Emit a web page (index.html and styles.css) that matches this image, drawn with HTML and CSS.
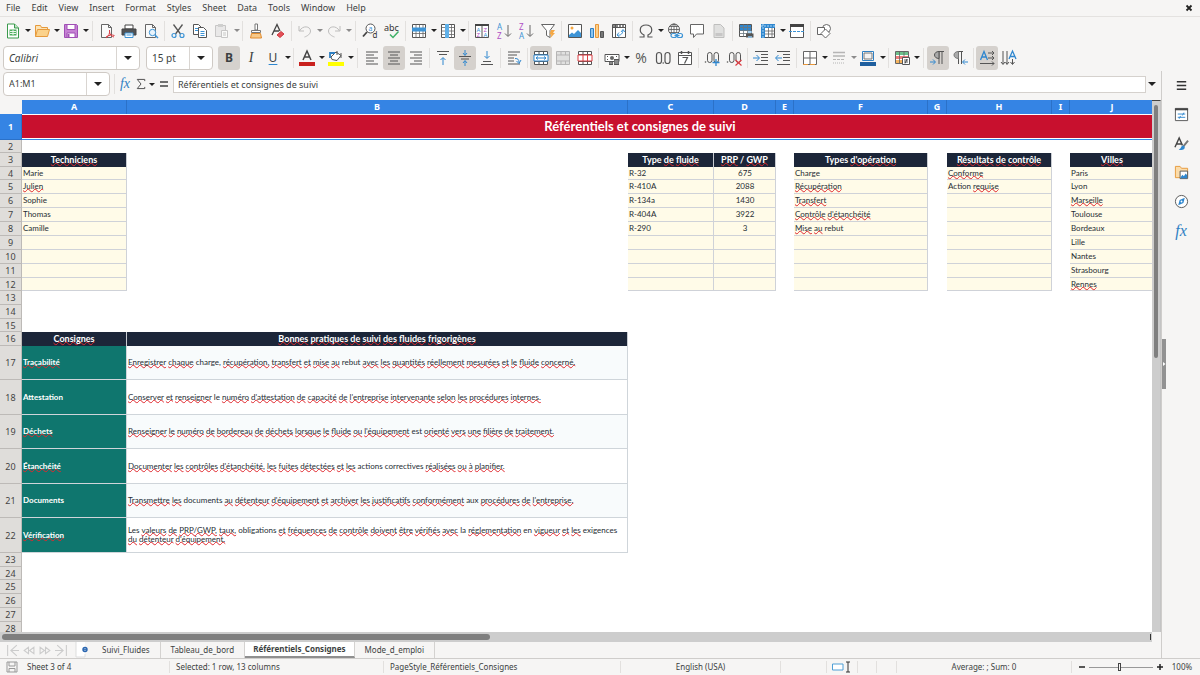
FILE: index.html
```html
<!DOCTYPE html>
<html lang="en">
<head>
<meta charset="utf-8">
<title>Référentiels_Consignes</title>
<link rel="stylesheet" href="styles.css">
</head>
<body>
<div class="app">
<header>
<nav class="menubar">
<button>File</button><button>Edit</button><button>View</button><button>Insert</button><button>Format</button><button>Styles</button><button>Sheet</button><button>Data</button><button>Tools</button><button>Window</button><button>Help</button>
<button class="close" aria-label="Close"><svg viewBox="0 0 8 8"><path d="M1.5 1.5l5 5M6.5 1.5l-5 5" stroke="#222" stroke-width="1.8"/></svg></button>
</nav>
<div class="toolbar" role="toolbar" aria-label="Standard">
<button class="tb" aria-label="New"><svg viewBox="0 0 16 16"><path d="M2.5 1h7l4 4v10h-11z" fill="#fff" stroke="#3a9a4c"/><path d="M9.500 1v4h4" fill="#bfe3c4" stroke="#3a9a4c"/><path d="M4.500 6.500h7v6h-7z" fill="#4cae5c"/><path d="M5 8.500h6M5 10.500h6M8 7v5" stroke="#e8f7ea"/></svg></button><button class="arr" aria-label="New options"></button>
<button class="tb" aria-label="Open"><svg viewBox="0 0 16 16"><path d="M1.500 13.500v-11h5l1 2h6v2" fill="#fce3b4" stroke="#e69a3c"/><path d="M1.500 13.500l2-7h12l-2 7z" fill="#fbd28b" stroke="#e69a3c"/></svg></button><button class="arr" aria-label="Open options"></button>
<button class="tb" aria-label="Save"><svg viewBox="0 0 16 16"><path d="M1.500 1.500h12l1 1v12h-13z" fill="#c681d4" stroke="#a04fb5"/><path d="M4 1.500h8v5H4z" fill="#fff" stroke="#a04fb5"/><path d="M4 10h8v4.500H4z" fill="#fff" stroke="#a04fb5"/><path d="M5.500 11v3" stroke="#a04fb5" stroke-width="2"/></svg></button><button class="arr" aria-label="Save options"></button>
<i class="sep wide"></i>
<button class="tb" aria-label="Export as PDF"><svg viewBox="0 0 16 16"><path d="M2.500 1.500h7l3 3v10h-10z" fill="#fafafa" stroke="#666"/><path d="M9.500 1.500v3h3" fill="none" stroke="#666"/><path d="M7 15c3-2 4-5 3.500-8M7 14c3-2 6-2.500 8.500-1.500M10.500 9c.5 2.500 2 4.500 4.500 5" fill="none" stroke="#d93c43"/></svg></button>
<button class="tb" aria-label="Print"><svg viewBox="0 0 16 16"><path d="M4 2h8v4H4z" fill="#fff" stroke="#444"/><path d="M1 6h14v6H1z" fill="#505356" stroke="#444"/><path d="M4 10h8v4.500H4z" fill="#fff" stroke="#3d94d6"/><path d="M5.500 12h5" stroke="#3d94d6"/></svg></button>
<button class="tb" aria-label="Print preview"><svg viewBox="0 0 16 16"><path d="M2.500 1.500h7l3 3v10h-10z" fill="#fafafa" stroke="#666"/><path d="M9.500 1.500v3h3" fill="none" stroke="#666"/><circle cx="9.500" cy="9.500" r="3.200" fill="#e9f4fc" stroke="#3d94d6"/><path d="M12 12l3 3" stroke="#3d94d6" stroke-width="1.500"/></svg></button>
<i class="sep"></i>
<button class="tb" aria-label="Cut"><svg viewBox="0 0 16 16"><path d="M3.500 1.500l7 9.500M12.500 1.500l-7 9.500" stroke="#555" stroke-width="1.300"/><circle cx="4" cy="12.500" r="2" fill="none" stroke="#3d94d6" stroke-width="1.200"/><circle cx="12" cy="12.500" r="2" fill="none" stroke="#3d94d6" stroke-width="1.200"/></svg></button>
<button class="tb" aria-label="Copy"><svg viewBox="0 0 16 16"><path d="M1.500 1.500h5l3 3v7h-8z" fill="#fff" stroke="#555"/><path d="M3 5.500h3M3 7.500h3" stroke="#3d94d6"/><path d="M6.500 4.500h5l3 3v7h-8z" fill="#fff" stroke="#555"/><path d="M8.500 8.500h4M8.500 10.500h4M8.500 12.500h4" stroke="#3d94d6"/></svg></button>
<button class="tb off" aria-label="Paste" disabled><svg viewBox="0 0 16 16"><path d="M1.500 2.500h10v11h-10z" fill="#ddd" stroke="#999"/><path d="M4 1h5v3H4z" fill="#aaa"/><path d="M7.500 7.500h6v7h-6z" fill="#fff" stroke="#999"/><path d="M9 10h3M9 12h3" stroke="#999"/></svg></button><button class="arr off" aria-label="Paste options" disabled></button>
<i class="sep"></i>
<button class="tb" aria-label="Clone formatting"><svg viewBox="0 0 16 16"><path d="M7 1h2.500v6H7z" fill="#fff" stroke="#777"/><path d="M3.500 7.500h9v2h-9z" fill="#fff" stroke="#777"/><path d="M3.500 10.500h9l1 4.500h-11z" fill="#f7c98a" stroke="#e08a2c"/></svg></button>
<button class="tb" aria-label="Clear formatting"><svg viewBox="0 0 16 16"><path d="M2 12L7 1.500 10 8M4 8h5" fill="none" stroke="#444" stroke-width="1.300"/><path d="M7 12l4-3.500 3 2.500-4 3.500z" fill="#e35158" stroke="#cf3a42"/></svg></button>
<i class="sep"></i>
<button class="tb off" aria-label="Undo" disabled><svg viewBox="0 0 16 16"><path d="M2 3v5h5M2.500 8c3-6 11-5 11 0 0 3-3 5-6 6" fill="none" stroke="#888"/></svg></button><button class="arr off" aria-label="Undo list" disabled></button>
<button class="tb off" aria-label="Redo" disabled><svg viewBox="0 0 16 16"><path d="M14 3v5H9M13.500 8c-3-6-11-5-11 0 0 3 3 5 6 6" fill="none" stroke="#888"/></svg></button><button class="arr off" aria-label="Redo list" disabled></button>
<i class="sep wide"></i>
<button class="tb" aria-label="Find and replace"><svg viewBox="0 0 16 16"><circle cx="8.500" cy="5.500" r="4.500" fill="#fff" stroke="#555"/><path d="M5 9l-4 4.500" stroke="#444" stroke-width="1.800"/><text x="6.500" y="8" font-size="7" fill="#3d94d6">a</text><text x="10.500" y="15" font-size="8" fill="#333">d</text></svg></button>
<button class="tb" aria-label="Spelling"><svg viewBox="0 0 16 16"><text x="0" y="8" font-size="9" fill="#333">abc</text><path d="M6 11.500l3 3 5.500-6" fill="none" stroke="#3fb168" stroke-width="1.500"/></svg></button>
<i class="sep"></i>
<button class="tb" aria-label="Row"><svg viewBox="0 0 16 16"><path d="M1.500 1.500h13v13h-13z" fill="#fff" stroke="#555"/><path d="M1.500 10.500h13M5 1.500v13M8.500 1.500v13M12 1.500v13" stroke="#666" stroke-width=".8"/><path d="M1 4.500h14v4H1z" fill="#3d94d6"/></svg></button><button class="arr" aria-label="Row options"></button>
<button class="tb" aria-label="Column"><svg viewBox="0 0 16 16"><path d="M1.500 1.500h13v13h-13z" fill="#fff" stroke="#555"/><path d="M1.500 4.500h13M1.500 8h13M1.500 11.500h13M11.500 1.500v13" stroke="#666" stroke-width=".8"/><path d="M5 1h4v14H5z" fill="#5fb0e8"/></svg></button><button class="arr" aria-label="Column options"></button>
<i class="sep"></i>
<button class="tb" aria-label="Sort"><svg viewBox="0 0 16 16"><path d="M1.500 1.500h13v13h-13zM8 1.500v13" fill="#fff" stroke="#555"/><path d="M1 2h14" stroke="#444" stroke-width="2"/><text x="2.500" y="8.500" font-size="6" fill="#3d94d6">A</text><text x="2.500" y="14" font-size="6" fill="#b04fc4">Z</text><text x="9.500" y="8.500" font-size="6" fill="#b04fc4">Z</text><text x="9.500" y="14" font-size="6" fill="#3d94d6">A</text></svg></button>
<button class="tb" aria-label="Sort ascending"><svg viewBox="0 0 16 16"><text x="1" y="7" font-size="8" fill="#3d94d6">A</text><text x="1" y="15.500" font-size="8" fill="#b04fc4">Z</text><path d="M12 2v11M9 10.500l3 3 3-3" fill="none" stroke="#666"/></svg></button>
<button class="tb" aria-label="Sort descending"><svg viewBox="0 0 16 16"><text x="1" y="7" font-size="8" fill="#b04fc4">Z</text><text x="1" y="15.500" font-size="8" fill="#3d94d6">A</text><path d="M12 2v11M9 10.500l3 3 3-3" fill="none" stroke="#666"/></svg></button>
<button class="tb" aria-label="AutoFilter"><svg viewBox="0 0 16 16"><path d="M1.500 1.500h13l-4.500 6v7l-3.500-2v-5z" fill="#fff" stroke="#666"/><path d="M11 7h4l-2 3h2l-5 5.500 1.500-4h-2z" fill="#f5a742"/></svg></button>
<i class="sep"></i>
<button class="tb" aria-label="Insert image"><svg viewBox="0 0 16 16"><path d="M1.500 1.500h13v13h-13z" fill="#fff" stroke="#555"/><circle cx="5" cy="5" r="1.500" fill="#f5a742"/><path d="M2 12l3-2.500L7 11l4-4 3 3v4H2z" fill="#3d94d6"/></svg></button>
<button class="tb" aria-label="Insert chart"><svg viewBox="0 0 16 16"><path d="M1.500 5.500h3v9h-3z" fill="#8cc5ef" stroke="#2f80c3"/><path d="M6.500 1.500h3v13h-3z" fill="#fbd08c" stroke="#e8973a"/><path d="M11.500 8.500h3v6h-3z" fill="#777" stroke="#555"/></svg></button>
<button class="tb" aria-label="Pivot table"><svg viewBox="0 0 16 16"><path d="M1.500 1.500h13v13h-13z" fill="#fff" stroke="#555"/><path d="M1.500 4.500h13M4.500 1.500v13" stroke="#555"/><path d="M2 3h12" stroke="#888" stroke-width="2" stroke-dasharray="2 1"/><path d="M6 12c4 1 6-2 6-5M10 9l2-2.500L14 9M8 9.500L6 12l2.500 2" fill="none" stroke="#3d94d6"/></svg></button>
<i class="sep"></i>
<button class="tb" aria-label="Special character"><svg viewBox="0 0 16 16"><path d="M1.500 14h4.500v-2C.5 9.500 1 2 8 2s7.500 7.500 2 10v2h4.500" fill="none" stroke="#555" stroke-width="1.200"/></svg></button><button class="arr" aria-label="Special character options"></button>
<button class="tb" aria-label="Hyperlink"><svg viewBox="0 0 16 16"><circle cx="7" cy="6.500" r="5.500" fill="#fff" stroke="#555"/><path d="M1.500 6.500h11M7 1v11M2.500 3.500h9M2.500 9.500h9" stroke="#555" stroke-width=".8"/><ellipse cx="7" cy="6.500" rx="2.800" ry="5.500" fill="none" stroke="#555" stroke-width=".8"/><path d="M5 10h11v5H5z" fill="#f6f5f4"/><rect x="4" y="10.500" width="5.500" height="4" rx="2" fill="none" stroke="#3d94d6" stroke-width="1.200"/><rect x="10" y="10.500" width="5.500" height="4" rx="2" fill="none" stroke="#3d94d6" stroke-width="1.200"/><path d="M7.500 12.500h5" stroke="#3d94d6" stroke-width="1.200"/></svg></button>
<button class="tb" aria-label="Comment"><svg viewBox="0 0 16 16"><path d="M1.500 1.500h13v9.500h-7l-3 3.500V11h-3z" fill="#fff" stroke="#666"/></svg></button>
<button class="tb off" aria-label="Headers and footers" disabled><svg viewBox="0 0 16 16"><path d="M3 1.500h6.500l3.500 3.500v9.500H3z" fill="#ccc" stroke="#888"/><path d="M4.500 10h7v3h-7z" fill="#999"/></svg></button>
<i class="sep"></i>
<button class="tb" aria-label="Print area"><svg viewBox="0 0 16 16"><path d="M1.500 1.500h12v12h-12z" fill="#fff" stroke="#555"/><path d="M2 2h11v6H2z" fill="#2f87cf"/><path d="M1.500 4.500h12M1.500 7.500h12M1.500 10.500h12M5.500 1.500v12M9.500 1.500v12" stroke="#6a7780" stroke-width=".8"/><path d="M8 10.500h7.500v4H8z" fill="#555"/><path d="M10 9h4M10 14h4" stroke="#8cc5ef" stroke-width="1.500"/></svg></button>
<button class="tb" aria-label="Freeze rows and columns"><svg viewBox="0 0 16 16"><path d="M1.500 1.500h13v13h-13z" fill="#fff" stroke="#555"/><path d="M1 1h14v4H1zM1 1h4v14H1z" fill="#2f87cf"/><path d="M5 8h10M5 11h10M8.500 5v10M12 5v10" stroke="#666" stroke-width=".8"/><path d="M3 1v14M1 3h14" stroke="#a9d4f4" stroke-dasharray="2 1"/></svg></button><button class="arr" aria-label="Freeze options"></button>
<button class="tb" aria-label="Split window"><svg viewBox="0 0 16 16"><path d="M1.500 1.500h13v13h-13z" fill="#fff" stroke="#555"/><path d="M1 2.500h14" stroke="#444" stroke-width="3"/><path d="M0 8.500h16" stroke="#3d94d6" stroke-dasharray="3 1"/></svg></button>
<i class="sep"></i>
<button class="tb" aria-label="Show draw functions"><svg viewBox="0 0 16 16"><circle cx="10.500" cy="5.500" r="4" fill="#fff" stroke="#666"/><path d="M1.500 4.500h7v7h-7z" fill="#fff" stroke="#666"/><path d="M9.500 6l4.500 4.500-4.500 4.500L5 10.500z" fill="#fff" stroke="#666"/></svg></button>
</div>
<div class="toolbar format" role="toolbar" aria-label="Formatting">
<div class="combo font"><input aria-label="Font name" value="Calibri"><button aria-label="Font list"></button></div>
<div class="combo size"><input aria-label="Font size" value="15 pt"><button aria-label="Size list"></button></div>
<button class="tb on bold" aria-pressed="true">B</button>
<button class="tb ital">I</button>
<button class="tb under">U</button><button class="arr" aria-label="Underline options"></button>
<i class="sep"></i>
<button class="tb" aria-label="Font colour"><svg viewBox="0 0 16 16"><path d="M4 10L8 1l4 9M5.500 7h5" fill="none" stroke="#444" stroke-width="1.500"/><path d="M0 12h16v4H0z" fill="#c9211e"/></svg></button><button class="arr" aria-label="Font colour options"></button>
<button class="tb" aria-label="Background colour"><svg viewBox="0 0 16 16"><path d="M3 7l5-5 5 3.500-4 5-5-1z" fill="#fff" stroke="#555"/><path d="M2 8V3h5" fill="none" stroke="#2f80c3" stroke-width="1.800"/><path d="M9 1v4M13 3v5" stroke="#555"/><path d="M0 12h16v4H0z" fill="#ff0"/></svg></button><button class="arr" aria-label="Background colour options"></button>
<i class="sep wide"></i>
<button class="tb" aria-label="Align left"><svg viewBox="0 0 16 16"><path d="M2 2h12M2 5h8M2 8h12M2 11h8M2 14h12" stroke="#555"/></svg></button>
<button class="tb on" aria-label="Center" aria-pressed="true"><svg viewBox="0 0 16 16"><path d="M2 2h12M4 5h8M2 8h12M4 11h8M2 14h12" stroke="#555"/></svg></button>
<button class="tb" aria-label="Align right"><svg viewBox="0 0 16 16"><path d="M2 2h12M6 5h8M2 8h12M6 11h8M2 14h12" stroke="#555"/></svg></button>
<i class="sep"></i>
<button class="tb" aria-label="Align top"><svg viewBox="0 0 16 16"><path d="M2 1.500h12M4 4.500h8" stroke="#555"/><path d="M8 15V8M5.500 10L8 7.500l2.500 2.500" fill="none" stroke="#2f87cf"/></svg></button>
<button class="tb on" aria-label="Center vertically" aria-pressed="true"><svg viewBox="0 0 16 16"><path d="M2 6.500h12M4 9h8" stroke="#555"/><path d="M8 0v5M6 3l2 2.500L10 3M8 16v-5M6 13l2-2.500 2 2.500" fill="none" stroke="#2f87cf"/></svg></button>
<button class="tb" aria-label="Align bottom"><svg viewBox="0 0 16 16"><path d="M4 11.500h8M2 14.500h12" stroke="#555"/><path d="M8 1v7M5.500 6L8 8.500 10.500 6" fill="none" stroke="#2f87cf"/></svg></button>
<i class="sep"></i>
<button class="tb" aria-label="Wrap text"><svg viewBox="0 0 16 16"><path d="M2 2h12M2 5h9M2 8h6M2 11h6M2 14h12" stroke="#555"/><path d="M9 8.500c3 0 4 1 4 4M10.500 11l2.500 2.500L15 10" fill="none" stroke="#2f87cf"/></svg></button>
<i class="sep"></i>
<button class="tb on" aria-label="Merge and center cells" aria-pressed="true"><svg viewBox="0 0 16 16"><path d="M1.500 1.500h13v13h-13zM1.500 4.500h13M1.500 11.500h13M6 1.500v3M10.500 1.500v3M6 11.500v3M10.500 11.500v3" fill="#fff" stroke="#555"/><path d="M1 5h14v6H1z" fill="#fff" stroke="#2f87cf"/><path d="M3 8h10M5 6.500L3 8l2 1.500M11 6.500L13 8l-2 1.500" fill="none" stroke="#2f87cf"/></svg></button>
<button class="tb off" aria-label="Merge cells" disabled><svg viewBox="0 0 16 16"><path d="M1.500 1.500h13v13h-13zM1.500 5h13M1.500 11h13M6 1.500v3.500M10.500 1.500v3.500M6 11v3.500M10.500 11v3.500" fill="#ccc" stroke="#777"/></svg></button>
<button class="tb" aria-label="Unmerge cells"><svg viewBox="0 0 16 16"><path d="M1.500 1.500h13v13h-13zM1.500 4.500h13M1.500 11.500h13M6 1.500v13M10.500 1.500v13" fill="#fff" stroke="#555"/><path d="M1 5h14v6H1zM6 5v6M10.500 5v6" fill="#fff" stroke="#dc3c42"/></svg></button>
<i class="sep"></i>
<button class="tb" aria-label="Currency"><svg viewBox="0 0 16 16"><path d="M1 4.500h14v7H1z" fill="#fff" stroke="#555"/><circle cx="8" cy="8" r="2" fill="#666"/><path d="M3 6.500h1M12 6.500h1M3 9.500h1" stroke="#555"/><path d="M5 11h4v4H5zM10 9h5v6h-5z" fill="#555"/><path d="M5.500 13h3M10.500 11h4M10.500 13h4" stroke="#ddd" stroke-width=".8"/></svg></button><button class="arr" aria-label="Currency options"></button>
<button class="tb glyph" aria-label="Percent">%</button>
<button class="tb" aria-label="Number"><svg viewBox="0 0 16 16"><rect x="1.500" y="2.500" width="5" height="11" rx="2.500" fill="none" stroke="#555" stroke-width="1.200"/><circle cx="8.200" cy="13" r=".8" fill="#555"/><rect x="10" y="2.500" width="5" height="11" rx="2.500" fill="none" stroke="#555" stroke-width="1.200"/></svg></button>
<button class="tb" aria-label="Date"><svg viewBox="0 0 16 16"><path d="M1.500 2.500h13v12h-13zM1.500 5.500h13" fill="#fff" stroke="#555"/><path d="M4.500 1v3M11.500 1v3" stroke="#555" stroke-width="1.500"/><path d="M5.500 7.500h5l-3 6" fill="none" stroke="#555" stroke-width="1.200"/></svg></button>
<i class="sep"></i>
<button class="tb" aria-label="Add decimal place"><svg viewBox="0 0 16 16"><circle cx="1.500" cy="12" r=".8" fill="#555"/><rect x="3.500" y="2.500" width="4.500" height="10" rx="2.250" fill="none" stroke="#555"/><rect x="10" y="2.500" width="4.500" height="10" rx="2.250" fill="none" stroke="#555"/><path d="M12 9v7M8.500 12.500h7" stroke="#2f87cf" stroke-width="1.300"/></svg></button>
<button class="tb" aria-label="Delete decimal place"><svg viewBox="0 0 16 16"><circle cx="1.500" cy="12" r=".8" fill="#555"/><rect x="3.500" y="2.500" width="4.500" height="10" rx="2.250" fill="none" stroke="#555"/><rect x="10" y="2.500" width="4.500" height="10" rx="2.250" fill="none" stroke="#555"/><path d="M9.500 10l6 5.500M15.500 10l-6 5.500" stroke="#dc3c42" stroke-width="1.200"/></svg></button>
<i class="sep"></i>
<button class="tb" aria-label="Increase indent"><svg viewBox="0 0 16 16"><path d="M2 1.500h13M8 4.500h7M8 7.500h7M8 10.500h7M2 14.500h13" stroke="#555"/><path d="M0 8h6M3.500 5L6.500 8l-3 3" fill="none" stroke="#2f87cf"/></svg></button>
<button class="tb" aria-label="Decrease indent"><svg viewBox="0 0 16 16"><path d="M2 1.500h13M8 4.500h7M8 7.500h7M8 10.500h7M2 14.500h13" stroke="#555"/><path d="M7 8H1M3.500 5L.5 8l3 3" fill="none" stroke="#2f87cf"/></svg></button>
<i class="sep"></i>
<button class="tb" aria-label="Borders"><svg viewBox="0 0 16 16"><path d="M1.500 1.500h13v13h-13zM1.500 8h13M8 1.500v13" fill="#fff" stroke="#666"/><path d="M1 14.500h14" stroke="#e8973a" stroke-dasharray="5 2"/></svg></button><button class="arr" aria-label="Borders options"></button>
<button class="tb off" aria-label="Border style" disabled><svg viewBox="0 0 16 16"><path d="M2 2.500h12M2 6h12" stroke="#777" stroke-width="1.500"/><path d="M2 9.500h12" stroke="#777" stroke-dasharray="3 1"/><path d="M2 13h12" stroke="#777" stroke-dasharray="1 1"/></svg></button><button class="arr off" aria-label="Border style options" disabled></button>
<button class="tb" aria-label="Border colour"><svg viewBox="0 0 16 16"><path d="M2.500 1.500h11v9h-11z" fill="#fff" stroke="#2f80c3"/><path d="M4 3h8v6H4z" fill="#f3f3f3" stroke="#777"/><path d="M0 12h16v4H0z" fill="#1f5f9e"/></svg></button><button class="arr" aria-label="Border colour options"></button>
<i class="sep"></i>
<button class="tb" aria-label="Conditional formatting"><svg viewBox="0 0 16 16"><path d="M1.500 1.500h13v12h-13z" fill="#fff" stroke="#666"/><path d="M2 2h12v3H2z" fill="#6cc08b"/><path d="M2 6h12v3H2z" fill="#ee7d7d"/><path d="M2 10h6v3H2z" fill="#f5b45f"/><path d="M5.500 1.500v12M10 1.500v5" stroke="#666" stroke-width=".8"/><path d="M8.500 7.500h7v7h-7z" fill="#fff" stroke="#555"/><path d="M10 10h4M10 12h4M13 9l-2 4.500" stroke="#333" stroke-width=".8"/></svg></button><button class="arr" aria-label="Conditional options"></button>
<i class="sep wide"></i>
<button class="tb on" aria-label="Left to right" aria-pressed="true"><svg viewBox="0 0 16 16"><path d="M9 2v12M12 2v12M8 1.500h6" stroke="#555" fill="none"/><path d="M9 1.500c-6 0-6 7 0 7z" fill="#aaa" stroke="#555"/><path d="M0 12h5M3 9.500L5.500 12 3 14.500" fill="none" stroke="#2f87cf"/></svg></button>
<button class="tb" aria-label="Right to left"><svg viewBox="0 0 16 16"><path d="M6.500 2v12M9.500 2v12M6 1.500h5" stroke="#555" fill="none"/><path d="M6.500 1.500c-6 0-6 7 0 7z" fill="#aaa" stroke="#777"/><path d="M16 12h-5M13 9.500L10.500 12l2.500 2.500" fill="none" stroke="#2f87cf"/></svg></button>
<i class="sep"></i>
<button class="tb on" aria-label="Text direction from left to right" aria-pressed="true"><svg viewBox="0 0 16 16"><path d="M1.500 10L5 1.500 8.500 10M3 7h4" fill="none" stroke="#2f87cf" stroke-width="1.300"/><path d="M9 3h6M9 8h6M1 13.500h14M13 1l2 2-2 2M13 6l2 2-2 2M13 11.500l2 2-2 2" fill="none" stroke="#555"/></svg></button>
<button class="tb" aria-label="Text direction from top to bottom"><svg viewBox="0 0 16 16"><path d="M8 9l3.500-8L15 9M9.500 6.500h4" fill="none" stroke="#2f87cf" stroke-width="1.300"/><path d="M2 1v13M6 1v13M11.500 9v5M0 12l2 2.500L4 12M4.500 12L6 14.500 8 12M9.500 12l2 2.500 2-2.500" fill="none" stroke="#555"/></svg></button>
</div>
</header>
<div class="work">
<main>
<div class="formula">
<div class="combo name"><input aria-label="Name box" value="A1:M1"><button aria-label="Manage names"></button></div>
<i class="sep"></i>
<button class="fx" aria-label="Function wizard"><em>fx</em></button>
<button class="sum" aria-label="Select function"><svg viewBox="0 0 12 14"><path d="M10.500 3.500V1.500h-9L6 7l-4.500 5.500h9v-2" fill="none" stroke="#555" stroke-width="1.200"/></svg></button><button class="arr" aria-label="Function options"></button>
<button class="eq" aria-label="Formula"><svg viewBox="0 0 10 10"><path d="M1 3h8M1 7h8" stroke="#444" stroke-width="1.500"/></svg></button>
<input class="line" aria-label="Input line" value="Référentiels et consignes de suivi">
<button class="arr expand" aria-label="Expand formula bar"></button>
</div>
<div class="pane">
<div class="sheet">
<table>
<colgroup><col class="n"><col class="ca"><col class="cb"><col class="cc"><col class="cd"><col class="ce"><col class="cf"><col class="cg"><col class="ch"><col class="ci"><col class="cj"><col class="rest"></colgroup>
<thead><tr><th class="corner"></th><th>A</th><th>B</th><th>C</th><th>D</th><th>E</th><th>F</th><th>G</th><th>H</th><th>I</th><th>J</th><th></th></tr></thead>
<tbody>
<tr class="title"><th class="sel">1</th><td colspan="11">Référentiels et consignes de suivi</td></tr>
<tr class="less"><th>2</th></tr>
<tr class="heads"><th>3</th><td class="h"><u>Techniciens</u></td><td></td><td class="h">Type <u>de</u> <u>fluide</u></td><td class="h"><u>PRP</u> / <u>GWP</u></td><td></td><td class="h">Types <u>d'opération</u></td><td></td><td class="h"><u>Résultats</u> <u>de</u> <u>contrôle</u></td><td></td><td class="h"><u>Villes</u></td></tr>
<tr class="less"><th>4</th><td class="y">Marie</td><td></td><td class="y">R-32</td><td class="y c">675</td><td></td><td class="y">Charge</td><td></td><td class="y"><u>Conforme</u></td><td></td><td class="y">Paris</td></tr>
<tr><th>5</th><td class="y"><u>Julien</u></td><td></td><td class="y">R-410A</td><td class="y c">2088</td><td></td><td class="y"><u>Récupération</u></td><td></td><td class="y">Action <u>requise</u></td><td></td><td class="y">Lyon</td></tr>
<tr><th>6</th><td class="y">Sophie</td><td></td><td class="y">R-134a</td><td class="y c">1430</td><td></td><td class="y"><u>Transfert</u></td><td></td><td class="y"></td><td></td><td class="y"><u>Marseille</u></td></tr>
<tr><th>7</th><td class="y">Thomas</td><td></td><td class="y">R-404A</td><td class="y c">3922</td><td></td><td class="y"><u>Contrôle</u> <u>d'étanchéité</u></td><td></td><td class="y"></td><td></td><td class="y">Toulouse</td></tr>
<tr><th>8</th><td class="y">Camille</td><td></td><td class="y">R-290</td><td class="y c">3</td><td></td><td class="y"><u>Mise</u> <u>au</u> rebut</td><td></td><td class="y"></td><td></td><td class="y">Bordeaux</td></tr>
<tr><th>9</th><td class="y"></td><td></td><td class="y"></td><td class="y"></td><td></td><td class="y"></td><td></td><td class="y"></td><td></td><td class="y">Lille</td></tr>
<tr><th>10</th><td class="y"></td><td></td><td class="y"></td><td class="y"></td><td></td><td class="y"></td><td></td><td class="y"></td><td></td><td class="y">Nantes</td></tr>
<tr><th>11</th><td class="y"></td><td></td><td class="y"></td><td class="y"></td><td></td><td class="y"></td><td></td><td class="y"></td><td></td><td class="y">Strasbourg</td></tr>
<tr class="less"><th>12</th><td class="y"></td><td></td><td class="y"></td><td class="y"></td><td></td><td class="y"></td><td></td><td class="y"></td><td></td><td class="y"><u>Rennes</u></td></tr>
<tr><th>13</th></tr>
<tr><th>14</th></tr>
<tr class="less"><th>15</th></tr>
<tr class="heads"><th>16</th><td class="h"><u>Consignes</u></td><td class="h"><u>Bonnes</u> <u>pratiques</u> <u>de</u> <u>suivi</u> <u>des</u> <u>fluides</u> <u>frigorigènes</u></td></tr>
<tr class="tall"><th>17</th><td class="k"><u>Traçabilité</u></td><td class="t alt"><u>Enregistrer</u> <u>chaque</u> charge, <u>récupération,</u> <u>transfert</u> <u>et</u> <u>mise</u> <u>au</u> rebut <u>avec</u> <u>les</u> <u>quantités</u> <u>réellement</u> <u>mesurées</u> <u>et</u> <u>le</u> <u>fluide</u> <u>concerné.</u></td></tr>
<tr class="tall more"><th>18</th><td class="k">Attestation</td><td class="t"><u>Conserver</u> <u>et</u> <u>renseigner</u> le <u>numéro</u> <u>d'attestation</u> <u>de</u> <u>capacité</u> <u>de</u> <u>l'entreprise</u> <u>intervenante</u> <u>selon</u> <u>les</u> <u>procédures</u> <u>internes.</u></td></tr>
<tr class="tall"><th>19</th><td class="k"><u>Déchets</u></td><td class="t alt"><u>Renseigner</u> <u>le</u> <u>numéro</u> <u>de</u> <u>bordereau</u> <u>de</u> <u>déchets</u> <u>lorsque</u> <u>le</u> <u>fluide</u> <u>ou</u> <u>l'équipement</u> est <u>orienté</u> <u>vers</u> <u>une</u> <u>filière</u> <u>de</u> <u>traitement.</u></td></tr>
<tr class="tall more"><th>20</th><td class="k"><u>Étanchéité</u></td><td class="t"><u>Documenter</u> <u>les</u> <u>contrôles</u> <u>d'étanchéité,</u> <u>les</u> <u>fuites</u> <u>détectées</u> <u>et</u> <u>les</u> actions correctives <u>réalisées</u> <u>ou</u> <u>à</u> <u>planifier.</u></td></tr>
<tr class="tall"><th>21</th><td class="k">Documents</td><td class="t alt"><u>Transmettre</u> <u>les</u> documents <u>au</u> <u>détenteur</u> <u>d'équipement</u> <u>et</u> <u>archiver</u> <u>les</u> <u>justificatifs</u> <u>conformément</u> aux <u>procédures</u> <u>de</u> <u>l'entreprise.</u></td></tr>
<tr class="tall more"><th>22</th><td class="k"><u>Vérification</u></td><td class="t">Les <u>valeurs</u> <u>de</u> <u>PRP/GWP,</u> <u>taux,</u> obligations <u>et</u> <u>fréquences</u> <u>de</u> <u>contrôle</u> <u>doivent</u> <u>être</u> <u>vérifiés</u> <u>avec</u> la <u>réglementation</u> en <u>vigueur</u> <u>et</u> <u>les</u> exigences <span class="keep"><u>du</u> <u>détenteur</u> <u>d'équipement.</u></span></td></tr>
<tr><th>23</th></tr>
<tr class="less"><th>24</th></tr>
<tr><th>25</th></tr>
<tr><th>26</th></tr>
<tr><th>27</th></tr>
<tr><th>28</th></tr>
</tbody>
</table>
</div>
<div class="vscroll"><i></i></div>
</div>
<div class="hscroll"><i></i><b></b></div>
<div class="tabs">
<div class="tabnav">
<button aria-label="First sheet"><svg viewBox="0 0 12 12"><path d="M1.500 1v10M10 1L4.500 6l5.500 5M4 6h8" fill="none" stroke="#ccc"/></svg></button>
<button aria-label="Previous sheet"><svg viewBox="0 0 12 12"><path d="M6 3L2 6l4 3zM11 3L7 6l4 3z" fill="none" stroke="#ccc"/></svg></button>
<button aria-label="Next sheet"><svg viewBox="0 0 12 12"><path d="M1 3l4 3-4 3zM6 3l4 3-4 3z" fill="none" stroke="#ccc"/></svg></button>
<button aria-label="Last sheet"><svg viewBox="0 0 12 12"><path d="M10.500 1v10M2 1l5.500 5L2 11M8 6H0" fill="none" stroke="#ccc"/></svg></button>
</div>
<button class="add" aria-label="Add sheet"><svg viewBox="0 0 16 16"><path d="M2 0h9v15H2z" fill="#fff"/><path d="M2 0v15h9v-3" fill="none" stroke="#ddd"/><circle cx="11" cy="7.500" r="2" fill="#fff" stroke="#2a66b0" stroke-width="1.400"/><path d="M11 5.500v4M9 7.500h4" stroke="#2a66b0" stroke-width=".8"/></svg></button>
<button class="tab">Suivi_Fluides</button><button class="tab">Tableau_de_bord</button><button class="tab cur">Référentiels_Consignes</button><button class="tab">Mode_d_emploi</button>
</div>
</main>
<aside>
<button class="handle" aria-label="Hide sidebar"><svg viewBox="0 0 4 6"><path d="M1 1l2.500 2L1 5z" fill="#fff"/></svg></button>
<button aria-label="Sidebar settings"><svg viewBox="0 0 16 16"><path d="M3 4h10M3 8h10M3 12h10" stroke="#333" stroke-width="1.500"/></svg></button>
<button aria-label="Properties"><svg viewBox="0 0 16 16"><path d="M1.500 1.500h13v13h-13z" fill="#fff" stroke="#555"/><path d="M1 2.500h14" stroke="#444" stroke-width="2"/><path d="M4 7.500h8M4 11h8M10.500 6L9 9M7 9.500L5.500 12.500" stroke="#2f87cf"/></svg></button>
<button aria-label="Styles"><svg viewBox="0 0 16 16"><path d="M1 12L5.500 2 9 10M3 8.500h5" fill="none" stroke="#444" stroke-width="1.500"/><path d="M15 5l-5 6" stroke="#777" stroke-width="2"/><path d="M10 10c-3 0-2 4-5 4 2 2 7 1 6.500-2.500z" fill="#2f87cf"/></svg></button>
<button aria-label="Gallery"><svg viewBox="0 0 16 16"><path d="M1.500 13.500v-12h5l1.500 2h6.500v10z" fill="#fbdcab" stroke="#e69a3c"/><path d="M6.500 6.500h8v8h-8z" fill="#fff" stroke="#555"/><path d="M7 13l2-2.500 1.500 1.500 2-3L14 11v3H7z" fill="#2f87cf"/></svg></button>
<button aria-label="Navigator"><svg viewBox="0 0 16 16"><circle cx="8" cy="8" r="6.500" fill="#fff" stroke="#555"/><path d="M11.500 4L10 9.500 4.500 12 6 6.500z" fill="#2f87cf"/><circle cx="8" cy="8" r="1" fill="#fff"/></svg></button>
<button class="fx" aria-label="Functions"><em>fx</em></button>
</aside>
</div>
<footer>
<div class="save"><svg viewBox="0 0 12 12"><path d="M1 1h10v10H1zM3 1v4h6V1M3 11V7.500h6V11" fill="none" stroke="#999"/></svg></div>
<div class="nb">Sheet 3 of 4</div>
<div>Selected: 1 row, 13 columns</div>
<div>PageStyle_Référentiels_Consignes</div>
<div class="mid">English (USA)</div>
<div></div>
<div class="mode"><svg viewBox="0 0 24 12"><path d="M3.500 3h10.500v6H3.500z" fill="#fff" stroke="#4f9fd6"/><path d="M17 1h4M17 11h4M19 1v10" stroke="#333"/></svg></div>
<div></div>
<div></div>
<div class="mid">Average: ; Sum: 0</div>
<div class="zoom"><button aria-label="Zoom out"><svg viewBox="0 0 8 8"><path d="M1 4h6" stroke="#222" stroke-width="1.500"/></svg></button><input type="range" aria-label="Zoom" min="0" max="100" value="48"><button aria-label="Zoom in"><svg viewBox="0 0 8 8"><path d="M1 4h6M4 1v6" stroke="#222" stroke-width="1.500"/></svg></button></div>
<div class="mid nb">100%</div>
</footer>
</div>
</body>
</html>
```

FILE: styles.css
```css
* { box-sizing: border-box; }
body {
  margin: 0;
  background: #f6f5f4;
  color: #3c3f41;
  font: 9px/12px "Noto Sans", "Open Sans", sans-serif;
}
button, input { font: inherit; color: inherit; border: 0; padding: 0; margin: 0; background: none; }
svg { display: block; }
.app { height: 100vh; display: flex; flex-direction: column; overflow: hidden; }

/* menu bar */
.menubar { display: flex; align-items: center; gap: 1px; height: 17px; padding: 0 7px 0 1px; border-bottom: 1px solid #e4e2e0; }
.menubar button { padding: 0 5px; }
.menubar .close { margin-left: auto; padding: 0; }
.close svg { width: 8px; height: 8px; }

/* toolbars */
.toolbar { display: flex; align-items: center; height: 27px; padding-left: 2px; }
.tb { width: 22px; height: 24px; flex: none; display: flex; align-items: center; justify-content: center; border-radius: 3px; }
.tb svg { width: 16px; height: 16px; overflow: visible; }
.tb.on { background: #d5d1cd; }
.off { opacity: .5; }
.arr { width: 7px; height: 24px; flex: none; display: flex; align-items: center; justify-content: center; }
.arr::after, .combo button::after {
  content: "";
  border: 3px solid transparent;
  border-top: 3px solid #222;
  border-bottom: 0;
}
.sep { width: 1px; height: 20px; margin: 0 2px; background: #e2e0de; flex: none; }
.sep.wide { margin: 0 3px; }
.bold { font-size: 12px; font-weight: 700; }
.ital { font: italic 14px "Liberation Serif", serif; }
.under { font-size: 12px; text-decoration: underline #2f87cf; text-underline-offset: 2px; }
.glyph { font: 14px "Open Sans", sans-serif; color: #555; }
svg text { font-family: "Noto Sans", sans-serif; }

.combo { display: flex; flex: none; height: 24px; border: 1px solid #cfcac5; border-radius: 4px; background: #fff; }
.combo input { flex: 1; min-width: 0; padding-left: 5px; font-size: 10px; outline: 0; }
.combo button { width: 23px; border-left: 1px solid #d9d5d1; display: flex; align-items: center; justify-content: center; }
.combo button::after { border-width: 4px; border-bottom-width: 0; }
.font { width: 137px; margin: 0 6px 0 1px; }
.font input { font-style: italic; }
.size { width: 67px; margin-right: 5px; }

/* work area */
.work { flex: 1; min-height: 0; display: flex; }
main { flex: 1; min-width: 0; display: flex; flex-direction: column; }
.formula { display: flex; align-items: center; height: 29px; padding: 0 3px 3px 3px; }
.name { width: 107px; margin-right: 2px; }
.formula .name input { font-size: 9px; }
.fx { width: 16px; color: #2f80c3; font: 14px/16px "Liberation Serif", serif; }
.sum { width: 15px; display: flex; justify-content: center; }
.sum svg { width: 10px; height: 12px; }
.eq { width: 18px; display: flex; justify-content: center; }
.eq svg { width: 10px; height: 10px; }
.line { flex: 1; height: 17px; padding-left: 4px; background: #fff; border: 1px solid #d5d1cd; }
.expand { width: 12px; }
.expand::after { border-width: 4px; border-bottom-width: 0; }
.pane { flex: 1; min-height: 0; display: flex; }
.sheet { flex: 1; min-width: 0; overflow: hidden; background: #fff; }

table { table-layout: fixed; width: 1258px; border-spacing: 0; font: 8px/9px Lato, sans-serif; color: #262d34; }
.n { width: 22px; } .ca { width: 105px; } .cb { width: 501px; } .cc { width: 86px; } .cd { width: 62px; }
.ce { width: 18px; } .cf { width: 134px; } .cg { width: 19px; } .ch { width: 105px; } .ci { width: 18px; } .cj { width: 85px; }
tr { height: 14px; }
tr.less { height: 13px; }
tr.title { height: 26px; }
tr.tall { height: 34px; }
tr.tall.more { height: 35px; }
th, td { padding: 0; }
th { font: 9px/9px "Noto Sans", sans-serif; color: #444; background: #dfddda; border-bottom: 1px solid #bdbab7; border-right: 1px solid #bdbab7; }
thead th, th.sel { background: #3584e4; color: #fff; font-weight: 700; border-color: #2b71c8; }
thead th { border-bottom: 0; padding-bottom: 1px; }
thead th.corner { background: #f6f5f4; border: 0; }
.title td {
  background: #c8102e;
  color: #fff;
  font: 700 13px/20px Lato, sans-serif;
  text-align: center;
  padding-bottom: 2px;
  border-top: 1px solid #fff;
  border-bottom: 1px solid #3584e4;
  box-shadow: inset 0 -1px #fff;
}
td.h { background: #1c2639; color: #fff; font-size: 9px; font-weight: 700; text-align: center; padding-bottom: 2px; border-right: 1px solid #c8ccd2; }
td.y { background: #fffbe8; border: solid #cfd2d8; border-width: 0 1px 1px 0; padding-left: 1px; white-space: nowrap; }
td.y:first-of-type, td.k { padding-left: 1px; }
td.y.c { text-align: center; }
td.k { background: #0f766e; color: #fff; font-weight: 700; border: solid #cfd5da; border-width: 0 1px 1px 0; }
td.t { padding: 0 1px; border: solid #cfd5da; border-width: 0 1px 1px 0; }
td.alt { background: #f8fbfc; }
.keep { white-space: nowrap; }
u { text-decoration: underline wavy #e0282d 1px; text-underline-offset: -1px; text-decoration-skip-ink: none; }

/* scroll bars */
.vscroll { width: 9px; background: #cdcdcd; padding: 2px; border-right: 1px solid #c4c4c4; border-top: 1px solid #444; }
.vscroll i { display: block; height: 48%; margin-top: 2px; border-radius: 3px; background: #7f7f7f; }
.hscroll { display: flex; align-items: center; justify-content: space-between; height: 10px; margin-right: 9px; padding: 0 1px 0 2px; background: #cdcdcd; }
.hscroll i { width: 42.500%; height: 6px; border-radius: 3px; background: #7f7f7f; }
.hscroll b { width: 1px; height: 6px; background: #333; }

/* sheet tabs */
.tabs { display: flex; height: 16px; font-size: 8px; }
.tabnav { display: flex; align-items: center; padding: 0 6px; width: 74px; justify-content: space-between; }
.tabnav svg { width: 13px; height: 13px; }
.add { width: 18px; }
.add svg { width: 16px; height: 16px; }
.tab { padding: 0 10px; border-right: 1px solid #d4d2d0; }
.tab.cur { padding: 0 8px; background: #fff; font-weight: 700; border-bottom: 2px solid #8f8f8f; }

/* sidebar */
aside { position: relative; width: 39px; border-left: 1px solid #cfcdcb; display: flex; flex-direction: column; align-items: center; }
aside button { width: 24px; height: 29px; display: flex; align-items: center; justify-content: center; }
aside svg { width: 15px; height: 15px; }
aside .fx { font-size: 16px; }
aside .handle { position: absolute; left: 0; top: 268px; width: 4px; height: 50px; background: #929292; }
aside .handle svg { width: 4px; height: 6px; }

/* status bar */
footer {
  display: grid;
  grid-template-columns: 22px 147px 214fr 237fr 160fr 46px 31px 19px 20px 175fr 93px 36px;
  height: 17px;
  border-top: 1px solid #cfcdcb;
  font-size: 8px;
}
footer div { display: flex; align-items: center; padding-left: 6px; margin: 2px 0; border-left: 1px solid #e2e0de; white-space: nowrap; }
footer .mid { justify-content: center; padding-left: 0; }
footer .save, footer .nb { border-left: 0; }
footer .nb { padding-left: 5px; }
footer .mid.nb { padding-left: 0; }
.save svg { width: 12px; height: 12px; }
.mode svg { width: 24px; height: 12px; }
footer .mode { padding-left: 2px; }
.zoom button, .zoom svg { width: 8px; height: 8px; }
.zoom input { appearance: none; flex: 1; min-width: 0; height: 8px; margin: 0 3px; background: linear-gradient(#999, #999) center / 100% 1px no-repeat; }
.zoom input::-webkit-slider-thumb { appearance: none; width: 3px; height: 8px; background: #f6f5f4; border: 1px solid #444; }
```
